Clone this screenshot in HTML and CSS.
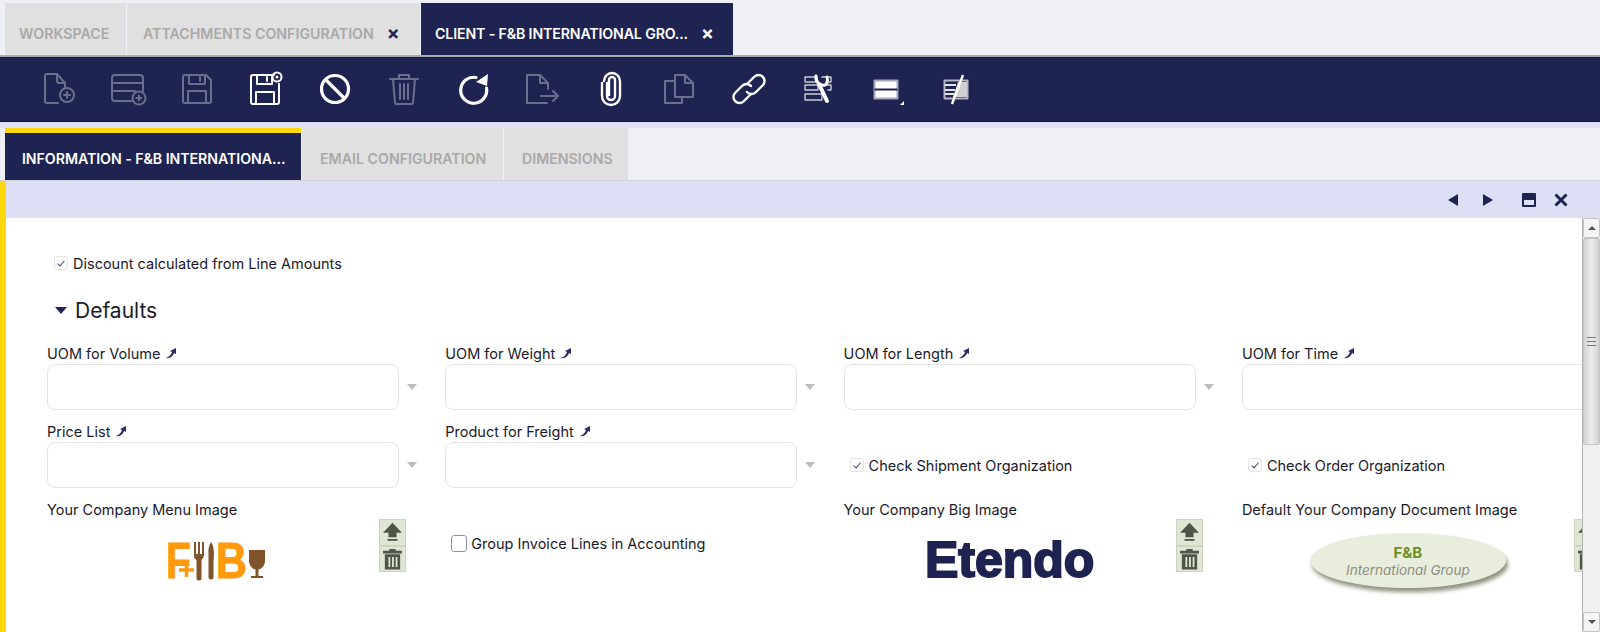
FILE: index.html
```html
<!DOCTYPE html>
<html lang="en">
<head>
    <meta charset="UTF-8">
    <title>Client - F&amp;B International Group</title>
    <link rel="stylesheet" href="styles.css">
</head>
<body>
    <div class="main-tabs">
        <div class="tab tab-first">WORKSPACE</div>
        <div class="tab tab-attach">ATTACHMENTS CONFIGURATION<span class="tab-close">×</span></div>
        <div class="tab tab-client tab-active">CLIENT - F&amp;B INTERNATIONAL GRO...<span class="tab-close">×</span></div>
    </div>

    <div class="toolbar">
        <div class="tool off"><svg viewBox="0 0 34 34"><path d="M16 31H5a2 2 0 0 1-2-2V4a2 2 0 0 1 2-2H15L23 11V15"/><path d="M15 2V9a2 2 0 0 0 2 2H23"/><circle cx="25" cy="23" r="7"/><path d="M25 20V26M22 23H28"/></svg></div>
        <div class="tool off"><svg viewBox="0 0 34 34"><path d="M21 29H4a3 3 0 0 1-3-3V6a3 3 0 0 1 3-3H29a3 3 0 0 1 3 3V19"/><path d="M1 11H32M1 19H24"/><circle cx="28" cy="26" r="6.5"/><path d="M28 23.5V28.5M25.5 26H30.5"/></svg></div>
        <div class="tool off"><svg viewBox="0 0 34 34"><path d="M5 3H26L31 8V29a2 2 0 0 1-2 2H5a2 2 0 0 1-2-2V5a2 2 0 0 1 2-2Z"/><path d="M9 3V12H25V3M20 5V9M8 31V19H26V31"/></svg></div>
        <div class="tool"><svg viewBox="0 0 34 34"><path d="M25 3H4a2 2 0 0 0-2 2V30a2 2 0 0 0 2 2H28a2 2 0 0 0 2-2V12"/><path d="M8 3V12H23V3M18 5V9M7 32V20H25V32" /><circle cx="28" cy="5" r="4.5"/><circle class="dot" cx="28" cy="5" r="1.5"/></svg></div>
        <div class="tool thick"><svg viewBox="0 0 34 34"><circle cx="17" cy="17" r="13.5"/><path d="M8 8L26 26"/></svg></div>
        <div class="tool off"><svg viewBox="0 0 34 34"><path d="M3 7H31M12 7V3H22V7M6 7L8 31a2 2 0 0 0 2 1H24a2 2 0 0 0 2-1L28 7M13 12V27M17 12V27M21 12V27"/></svg></div>
        <div class="tool thick"><svg viewBox="0 0 34 34"><path d="M20 5.500A13 13 0 1 0 30.500 16"/><path class="solid" d="M20 10L32 2L31 14Z"/></svg></div>
        <div class="tool off"><svg viewBox="0 0 34 34"><path d="M22 31H2V3H15L23 11V17"/><path d="M15 3V11H23M16 24H33M28 19L33 24L28 29"/></svg></div>
        <div class="tool thick-m"><svg viewBox="0 0 34 34"><path d="M13 11V24a4 4 0 0 0 8 0V8a3 3 0 0 0-6 0V23"/><path d="M8 11V24a9 9 0 0 0 18 0V9a8 8 0 0 0-16 0"/></svg></div>
        <div class="tool off"><svg viewBox="0 0 34 34"><path d="M12 9H2V31H19V25M12 25V3H22L30 11V25ZM22 3V11H30"/></svg></div>
        <div class="tool thick-m"><svg viewBox="0 0 34 34"><path d="M15 12L22 5a6 6 0 0 1 9 8L24 20a6 6 0 0 1-9 0"/><path d="M19 22L12 29a6 6 0 0 1-9-8L10 14a6 6 0 0 1 9 0"/></svg></div>
        <div class="tool tool-wrench"><svg viewBox="0 0 34 34"><path d="M4 5H16V10H4ZM21 5H30V10H25M4 13H17V18H4ZM26 13H30V18H27M4 22H21V28H4Z"/><path class="wide" d="M18 12L26 29"/><path class="jaw" d="M15 4C14 10 19 14 24 13C26 12 27 9 26 5"/></svg></div>
        <div class="tool tool-pane"><svg viewBox="0 0 34 34"><rect class="pane-face" x="4.500" y="8.500" width="23" height="18"/><path class="pane-line" d="M4.500 17.500H27.500"/><path class="solid" d="M34 29V33H30Z"/></svg></div>
        <div class="tool tool-pane"><svg viewBox="0 0 34 34"><rect class="pane-dark" x="5.500" y="8.500" width="23" height="18"/><path class="pane-stripe" d="M6 13H17M6 18H16M6 22H15"/><path class="pane-gray" d="M19 10H28V25H14Z"/><path class="slash" d="M24 3L13 32"/></svg></div>
    </div>

    <div class="sub-tabs">
        <div class="tab sub-info tab-active tab-flag">INFORMATION - F&amp;B INTERNATIONA...</div>
        <div class="tab sub-email">EMAIL CONFIGURATION</div>
        <div class="tab sub-dim">DIMENSIONS</div>
    </div>

    <div class="panel">
        <div class="panel-bar">
            <svg class="bar-icon" viewBox="0 0 16 16"><path d="M13 2V14L3 8Z"/></svg>
            <svg class="bar-icon" viewBox="0 0 16 16"><path d="M3 2V14L13 8Z"/></svg>
            <svg class="bar-icon bar-max" viewBox="0 0 16 16"><path fill-rule="evenodd" d="M2 1H14a1 1 0 0 1 1 1V14a1 1 0 0 1-1 1H2a1 1 0 0 1-1-1V2a1 1 0 0 1 1-1ZM3 8V13H13V8Z"/></svg>
            <svg class="bar-icon bar-x" viewBox="0 0 16 16"><path d="M2.500 2.500L13.500 13.500M13.500 2.500L2.500 13.500"/></svg>
        </div>

        <div class="panel-body">
            <div class="form">
                <div class="check-row check-top"><span class="check on"></span>Discount calculated from Line Amounts</div>

                <div class="section"><span class="section-arrow"></span>Defaults</div>

                <div class="grid">
                    <div class="field">
                        <div class="label">UOM for Volume<svg class="pin" viewBox="0 0 12 12"><path d="M1 11C4 10 6 8 7 5L5 4L11 1L11 7L9 6C8 9 5 12 1 11Z"/></svg></div>
                        <div class="combo"><div class="input"></div><span class="arrow"></span></div>
                    </div>
                    <div class="field">
                        <div class="label">UOM for Weight<svg class="pin" viewBox="0 0 12 12"><path d="M1 11C4 10 6 8 7 5L5 4L11 1L11 7L9 6C8 9 5 12 1 11Z"/></svg></div>
                        <div class="combo"><div class="input"></div><span class="arrow"></span></div>
                    </div>
                    <div class="field">
                        <div class="label">UOM for Length<svg class="pin" viewBox="0 0 12 12"><path d="M1 11C4 10 6 8 7 5L5 4L11 1L11 7L9 6C8 9 5 12 1 11Z"/></svg></div>
                        <div class="combo"><div class="input"></div><span class="arrow"></span></div>
                    </div>
                    <div class="field">
                        <div class="label">UOM for Time<svg class="pin" viewBox="0 0 12 12"><path d="M1 11C4 10 6 8 7 5L5 4L11 1L11 7L9 6C8 9 5 12 1 11Z"/></svg></div>
                        <div class="combo"><div class="input"></div><span class="arrow"></span></div>
                    </div>

                    <div class="field">
                        <div class="label">Price List<svg class="pin" viewBox="0 0 12 12"><path d="M1 11C4 10 6 8 7 5L5 4L11 1L11 7L9 6C8 9 5 12 1 11Z"/></svg></div>
                        <div class="combo"><div class="input"></div><span class="arrow"></span></div>
                    </div>
                    <div class="field">
                        <div class="label">Product for Freight<svg class="pin" viewBox="0 0 12 12"><path d="M1 11C4 10 6 8 7 5L5 4L11 1L11 7L9 6C8 9 5 12 1 11Z"/></svg></div>
                        <div class="combo"><div class="input"></div><span class="arrow"></span></div>
                    </div>
                    <div class="check-row check-cell"><span class="check on"></span>Check Shipment Organization</div>
                    <div class="check-row check-cell"><span class="check on"></span>Check Order Organization</div>

                    <div class="field">
                        <div class="label">Your Company Menu Image</div>
                        <div class="image-row">
                            <div class="image-box">
                                <svg class="logo-fb" viewBox="-4 -12 108 62">
                                    <text class="fb-orange" x="0" y="37" textLength="25" lengthAdjust="spacingAndGlyphs">F</text>
                                    <path class="fb-plus" d="M13 29H28M20.500 21V36"/>
                                    <path class="fb-brown" d="M28 1H30V13H32V1H34V13H36V1H38V14C38 17 36 18 35.500 19V37a2 2 0 0 1-5 0V19C29 18 28 17 28 14Z"/>
                                    <path class="fb-brown" d="M45 1C48 5 48.500 12 47.500 20V36a2 2 0 0 1-5 0V14C42 8 43 4 45 1Z"/>
                                    <text class="fb-orange" x="50" y="37" textLength="31" lengthAdjust="spacingAndGlyphs">B</text>
                                    <path class="fb-brown" d="M83 9H99V20C99 25 95 28 92.500 28.500V35H97V37H85V35H89.500V28.500C87 28 83 25 83 20Z"/>
                                </svg>
                            </div>
                            <div class="image-btns">
                                <div class="img-btn"><svg viewBox="0 0 25 25"><path d="M12.500 2L23 13H17V18H8V13H2Z"/><path d="M7 20H18V22H7Z"/></svg></div>
                                <div class="img-btn"><svg viewBox="0 0 25 25"><path fill-rule="evenodd" d="M9 1H16V3H23V6H2V3H9ZM4 7H21V24H4ZM8 10V21H10V10ZM12 10V21H14V10ZM16 10V21H18V10Z"/></svg></div>
                            </div>
                        </div>
                    </div>
                    <div class="check-row check-cell"><span class="check big"></span>Group Invoice Lines in Accounting</div>
                    <div class="field">
                        <div class="label">Your Company Big Image</div>
                        <div class="image-row">
                            <div class="image-box"><span class="logo-etendo">Etendo</span></div>
                            <div class="image-btns">
                                <div class="img-btn"><svg viewBox="0 0 25 25"><path d="M12.500 2L23 13H17V18H8V13H2Z"/><path d="M7 20H18V22H7Z"/></svg></div>
                                <div class="img-btn"><svg viewBox="0 0 25 25"><path fill-rule="evenodd" d="M9 1H16V3H23V6H2V3H9ZM4 7H21V24H4ZM8 10V21H10V10ZM12 10V21H14V10ZM16 10V21H18V10Z"/></svg></div>
                            </div>
                        </div>
                    </div>
                    <div class="field">
                        <div class="label">Default Your Company Document Image</div>
                        <div class="image-row">
                            <div class="image-box">
                                <div class="logo-oval">
                                    <span class="oval-top">F&amp;B</span>
                                    <span class="oval-sub">International Group</span>
                                </div>
                            </div>
                            <div class="image-btns">
                                <div class="img-btn"><svg viewBox="0 0 25 25"><path d="M12.500 2L23 13H17V18H8V13H2Z"/><path d="M7 20H18V22H7Z"/></svg></div>
                                <div class="img-btn"><svg viewBox="0 0 25 25"><path fill-rule="evenodd" d="M9 1H16V3H23V6H2V3H9ZM4 7H21V24H4ZM8 10V21H10V10ZM12 10V21H14V10ZM16 10V21H18V10Z"/></svg></div>
                            </div>
                        </div>
                    </div>
                </div>
            </div>

            <div class="scrollbar">
                <div class="sb-btn"><span class="sb-up"></span></div>
                <div class="sb-thumb"><span class="sb-grip"></span></div>
                <div class="sb-track"></div>
                <div class="sb-btn sb-btn-down"><span class="sb-down"></span></div>
            </div>
        </div>
    </div>
</body>
</html>
```

FILE: styles.css
```css
* {
    box-sizing: border-box;
}
body {
    margin: 0;
    width: 1600px;
    height: 632px;
    overflow: hidden;
    background: #eff0f6;
    font-family: Inter, "Noto Sans", sans-serif;
    font-size: 14.5px;
    color: #1a1a2a;
}

/* tabs */
.main-tabs {
    display: flex;
    height: 57px;
    padding: 3px 0 0 5px;
    border-bottom: 2px solid #a9abb3;
    gap: 1px;
}
.tab {
    display: flex;
    align-items: center;
    padding-top: 9px;
    background: #e0e0e0;
    color: #a9a9a9;
    font-size: 14.2px;
    font-weight: 600;
    white-space: nowrap;
}
.tab-active {
    background: #1f2352;
    color: #fff;
}
.tab-first {
    width: 121px;
    padding-left: 14px;
}
.tab-attach {
    width: 293px;
    padding-left: 16px;
}
.tab-client {
    width: 312px;
    padding-left: 14px;
    letter-spacing: -0.15px;
}
.tab-close {
    margin-left: 13px;
    font-size: 19px;
    font-weight: 700;
    color: #1f2352;
}
.tab-active .tab-close {
    color: #fff;
}

/* toolbar */
.toolbar {
    display: flex;
    align-items: center;
    height: 65px;
    padding: 0 0 2px 24px;
    background: #1f2352;
    border-top: 1px solid #14173c;
    border-bottom: 1px solid #14173c;
}
.tool {
    display: flex;
    justify-content: center;
    width: 69px;
}
.tool svg {
    width: 34px;
    height: 34px;
    overflow: visible;
    fill: none;
    stroke: #fff;
    stroke-width: 2;
    stroke-linejoin: round;
    stroke-linecap: round;
}
.tool.off svg {
    stroke: #6b6e8c;
}
.tool.thick svg {
    stroke-width: 3.2;
}
.tool.thick-m svg {
    stroke-width: 2.4;
}
.tool .solid,
.tool .dot {
    fill: #fff;
    stroke: none;
}
.tool-wrench svg {
    stroke: #c9cad8;
    stroke-width: 1.4;
}
.tool .wide {
    stroke: #fff;
    stroke-width: 4;
}
.tool .jaw {
    stroke: #fff;
    stroke-width: 3;
}
.tool-pane svg {
    stroke-linecap: butt;
}
.tool .pane-face {
    fill: #fff;
    stroke: #a7a8bc;
    stroke-width: 2;
}
.tool .pane-line {
    stroke: #1f2352;
    stroke-width: 2;
}
.tool .pane-dark {
    fill: #1f2352;
    stroke: #b4b5c6;
    stroke-width: 2;
}
.tool .pane-stripe {
    stroke: #e4e4ec;
    stroke-width: 2;
}
.tool .pane-gray {
    fill: #cfcfd4;
    stroke: none;
}
.tool .slash {
    stroke: #fff;
    stroke-width: 2.4;
}

/* sub tabs */
.sub-tabs {
    display: flex;
    height: 59px;
    padding: 6px 0 0 5px;
    background: linear-gradient(#dfe1f3 6px, #eff0f6 6px);
    border-bottom: 1px solid #d4d5dc;
    gap: 1px;
}
.sub-info {
    width: 296px;
    padding-left: 17px;
    letter-spacing: -0.06px;
}
.tab-flag {
    padding-top: 3px;
    border-top: 5px solid #ffd60a;
}
.sub-email {
    width: 201px;
    padding-left: 18px;
}
.sub-dim {
    width: 124px;
    padding-left: 18px;
}

/* panel */
.panel {
    height: 451px;
    border-left: 6px solid #ffd60a;
    background: #fff;
}
.panel-bar {
    display: flex;
    align-items: center;
    justify-content: flex-end;
    gap: 19px;
    height: 37px;
    padding-right: 31px;
    background: #dde0f5;
}
.bar-icon {
    width: 16px;
    height: 16px;
    fill: #1f2352;
}
.bar-max {
    margin-left: 6px;
}
.bar-x {
    margin-left: -3px;
    fill: none;
    stroke: #1f2352;
    stroke-width: 3;
}
.panel-body {
    display: flex;
    height: 414px;
}
.form {
    flex: 1;
    overflow: hidden;
    padding: 35px 0 0 41px;
}

/* checkboxes */
.check-row {
    display: flex;
    align-items: center;
    height: 20px;
    white-space: nowrap;
}
.check-top {
    padding-left: 7px;
}
.check-cell {
    padding-left: 6px;
    margin-top: 33px;
}
.check {
    position: relative;
    flex: none;
    width: 14px;
    height: 14px;
    margin-right: 5px;
    border: 1px solid #e2e2e8;
    border-radius: 3px;
    background: #fff;
}
.check.on::after {
    content: "";
    position: absolute;
    left: 4px;
    top: 2px;
    width: 3px;
    height: 6px;
    border-right: 1.5px solid #44486a;
    border-bottom: 1.5px solid #44486a;
    transform: rotate(40deg);
}
.check.big {
    width: 16px;
    height: 17px;
    margin-right: 4px;
    border: 1.5px solid #8d90c0;
}

.section {
    display: flex;
    align-items: center;
    height: 28px;
    margin-top: 23px;
    padding-left: 8px;
    font-size: 21px;
    font-weight: 400;
}
.section-arrow {
    width: 0;
    height: 0;
    margin-right: 8px;
    border-left: 6px solid transparent;
    border-right: 6px solid transparent;
    border-top: 7px solid #1f2352;
}

/* form grid */
.grid {
    display: grid;
    grid-template-columns: repeat(4, 398.3px);
    row-gap: 12px;
    margin-top: 20px;
}
.label {
    display: flex;
    align-items: center;
    height: 18px;
    margin-bottom: 2px;
    white-space: nowrap;
}
.pin {
    width: 12px;
    height: 12px;
    margin-left: 5px;
    fill: #2a2e63;
}
.combo {
    display: flex;
    align-items: center;
}
.input {
    flex: none;
    width: 352px;
    height: 46px;
    border: 1px solid #e4e4e8;
    border-radius: 8px;
    background: #fff;
}
.arrow {
    margin-left: 8px;
    border-left: 5px solid transparent;
    border-right: 5px solid transparent;
    border-top: 6px solid #bcbcbc;
}

/* image fields */
.image-row {
    display: flex;
    width: 359px;
    margin-top: -1px;
}
.image-box {
    display: flex;
    align-items: center;
    justify-content: center;
    flex: none;
    width: 332px;
    height: 82px;
}
.image-btns {
    flex: none;
    width: 27px;
}
.img-btn {
    height: 26.5px;
    padding: 1px;
    background: #dfe6d4;
    border: 1px solid #c9d5bd;
}
.img-btn svg {
    display: block;
    width: 100%;
    height: 100%;
    fill: #4f5548;
}
.logo-fb {
    width: 108px;
    height: 62px;
    margin: 0 0 0 5px;
}
.fb-orange {
    fill: #ff9a0d;
    stroke: #ff9a0d;
    stroke-width: 1;
    font-family: "Liberation Sans", sans-serif;
    font-weight: 700;
    font-size: 50px;
}
.fb-brown {
    fill: #80532a;
}
.fb-plus {
    fill: none;
    stroke: #ff9a0d;
    stroke-width: 3.5;
}
.logo-etendo {
    color: #1f2352;
    font-family: "Liberation Sans", sans-serif;
    font-weight: 700;
    font-size: 50px;
    line-height: 1;
    -webkit-text-stroke: 2px #1f2352;
}
.logo-oval {
    display: flex;
    flex-direction: column;
    align-items: center;
    justify-content: center;
    width: 196px;
    height: 55px;
    border-radius: 50%;
    background: #e9eddd;
    box-shadow: 2px 4px 4px #8f917f;
}
.oval-top {
    color: #6c8f1f;
    font-size: 15px;
    font-weight: 700;
}
.oval-sub {
    color: #8a8f84;
    font-size: 13.5px;
    font-style: italic;
}

/* scrollbar */
.scrollbar {
    display: flex;
    flex-direction: column;
    flex: none;
    width: 18px;
    background: #f0f0f0;
    border-left: 1px solid #b5b5b5;
}
.sb-btn {
    display: flex;
    align-items: center;
    justify-content: center;
    height: 20px;
    background: #f5f5f5;
    border: 1px solid #c4c4c4;
    border-radius: 2px;
}
.sb-thumb {
    display: flex;
    align-items: center;
    justify-content: center;
    height: 207px;
    background: linear-gradient(90deg, #d2d2d2, #ececec 50%, #d2d2d2);
    border: 1px solid #c4c4c4;
    border-radius: 2px;
}
.sb-grip {
    width: 9px;
    height: 9px;
    border-top: 1px solid #777;
    border-bottom: 1px solid #777;
    background: linear-gradient(#777, #777) center / 100% 1px no-repeat;
}
.sb-track {
    flex: 1;
}
.sb-up {
    border-left: 4px solid transparent;
    border-right: 4px solid transparent;
    border-bottom: 4px solid #555;
}
.sb-down {
    border-left: 4px solid transparent;
    border-right: 4px solid transparent;
    border-top: 4px solid #555;
}
```
